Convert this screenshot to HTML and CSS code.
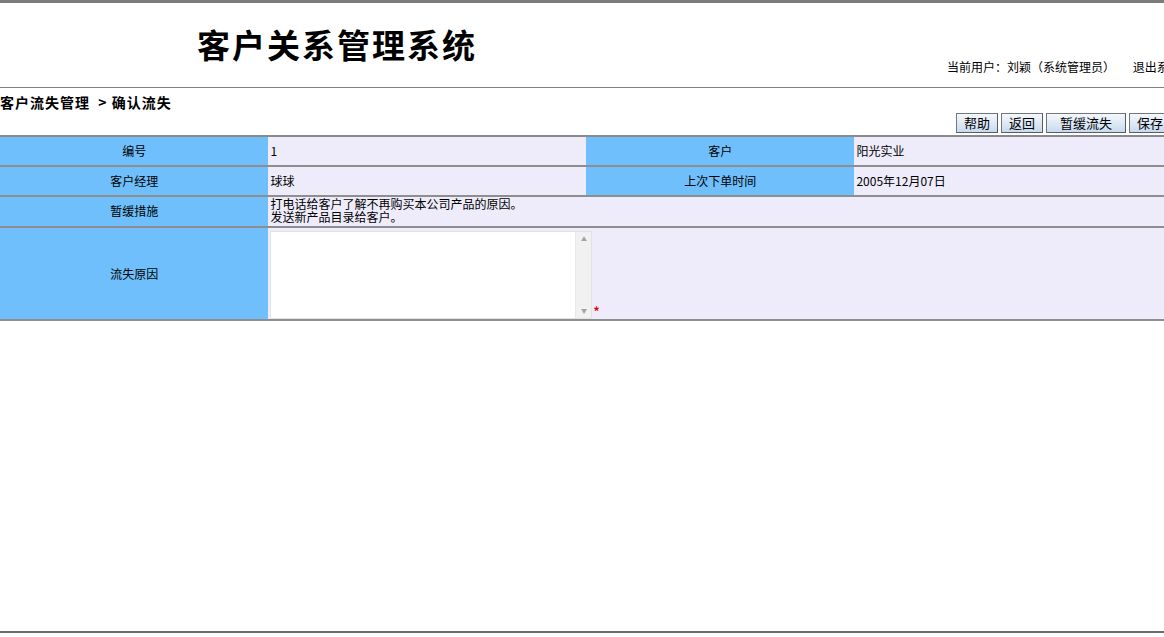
FILE: index.html
```html
<html>
  <head>
    <title>客户关系管理系统</title>
    <link rel="stylesheet" href="styles.css">
  </head>

  <body>
    <div id="page">
      <div class="header">
        <div class="title-box">
          <h1>客户关系管理系统</h1>
        </div>
        <div class="user-box">
          <span>当前用户：刘颖（系统管理员）</span>
          <a class="logout" href="#">退出系统</a>
        </div>
      </div>

      <div class="crumb">客户流失管理 &nbsp;&gt; 确认流失</div>

      <div class="toolbar">
        <button class="btn">帮助</button>
        <button class="btn">返回</button>
        <button class="btn btn-wide">暂缓流失</button>
        <button class="btn">保存</button>
      </div>

      <table class="detail">
        <tr class="row-short">
          <th>编号</th>
          <td>1</td>
          <th>客户</th>
          <td>阳光实业</td>
        </tr>
        <tr class="row-short">
          <th>客户经理</th>
          <td>球球</td>
          <th>上次下单时间</th>
          <td>2005年12月07日</td>
        </tr>
        <tr class="row-mid">
          <th>暂缓措施</th>
          <td colspan="3" class="multi">
            打电话给客户了解不再购买本公司产品的原因。<br />
            发送新产品目录给客户。
          </td>
        </tr>
        <tr class="row-tall">
          <th>流失原因</th>
          <td colspan="3" class="input-cell">
            <span class="text-box">
              <textarea name="reason"></textarea>
              <span class="fake-scroll">
                <span class="arrow">&#9650;</span>
                <span class="arrow">&#9660;</span>
              </span>
            </span><span class="required">*</span>
          </td>
        </tr>
      </table>
    </div>
    <div class="footer-line"></div>
  </body>
</html>
```

FILE: styles.css
```css
html,
body {
  margin: 0;
  padding: 0;
  overflow: hidden;
  background: #fff;
}

body {
  font: 12px "Noto Sans CJK SC", "Liberation Sans", sans-serif;
  color: #000;
  border-top: 3px solid #7c7c7c;
  height: 634px;
  position: relative;
}

#page {
  width: 1180px;
}

.header {
  display: flex;
  height: 84px;
  border-bottom: 1px solid #808080;
}

.title-box {
  flex: 0 0 750px;
  padding-left: 197px;
  box-sizing: border-box;
}

h1 {
  margin: 21px 0 0;
  font-size: 33px;
  font-weight: bold;
  letter-spacing: 2px;
  line-height: 40px;
}

.user-box {
  margin-left: 197px;
  padding-top: 55px;
  white-space: nowrap;
  font-size: 12px;
}

.logout {
  margin-left: 15px;
  color: #000;
  text-decoration: none;
}

.crumb {
  height: 24px;
  line-height: 28px;
  font-size: 14px;
  font-weight: bold;
  letter-spacing: 1px;
  white-space: nowrap;
}

.toolbar {
  display: flex;
  justify-content: flex-end;
  gap: 3px;
  height: 22px;
  padding-top: 1px;
  padding-right: 9px;
}

.btn {
  width: 42px;
  height: 20px;
  padding: 0;
  font: 13px "Noto Sans CJK SC", sans-serif;
  line-height: 16px;
  color: #000;
  border: 1px solid #6f7780;
  border-right-color: #555c66;
  border-bottom-color: #555c66;
  background: linear-gradient(#f5f8fc, #c8daee);
}

.btn-wide {
  width: 80px;
}

.detail {
  width: 1172px;
  border-collapse: collapse;
  table-layout: fixed;
  border-top: 2px solid #8a8a8a;
  font: 12px "Noto Sans CJK SC", "Liberation Sans", sans-serif;
}

.detail th,
.detail td {
  border-bottom: 2px solid #8e8e8e;
  padding: 0;
  vertical-align: middle;
}

.detail th {
  width: 268px;
  background: #6ebffb;
  font-weight: normal;
  text-align: center;
}

.detail td {
  width: 315px;
  background: #eeecfa;
  padding-left: 2px;
}

.row-short th,
.row-short td {
  height: 30px;
  padding-bottom: 2px;
}

.row-mid th,
.row-mid td {
  height: 31px;
  padding-bottom: 3px;
}

.multi {
  line-height: 13px;
}

.row-tall th,
.row-tall td {
  height: 93px;
}

.input-cell {
  white-space: nowrap;
}

.text-box {
  display: inline-flex;
  width: 322px;
  height: 88px;
  margin-top: 2px;
  border: 1px solid #e2e2e2;
  background: #fff;
  vertical-align: bottom;
  box-sizing: border-box;
}

textarea {
  flex: 1;
  border: none;
  outline: none;
  resize: none;
  background: #fff;
}

.fake-scroll {
  display: flex;
  flex-direction: column;
  justify-content: space-between;
  width: 15px;
  background: #f1f1f1;
  border-left: 1px solid #e8e8e8;
}

.arrow {
  font-size: 6px;
  line-height: 14px;
  text-align: center;
  color: #a3a3a3;
}

.required {
  color: #e00000;
  font-weight: bold;
  margin-left: 1px;
}

.footer-line {
  position: absolute;
  left: 0;
  right: 0;
  top: 628px;
  border-top: 2px solid #6a6a6a;
}
```
